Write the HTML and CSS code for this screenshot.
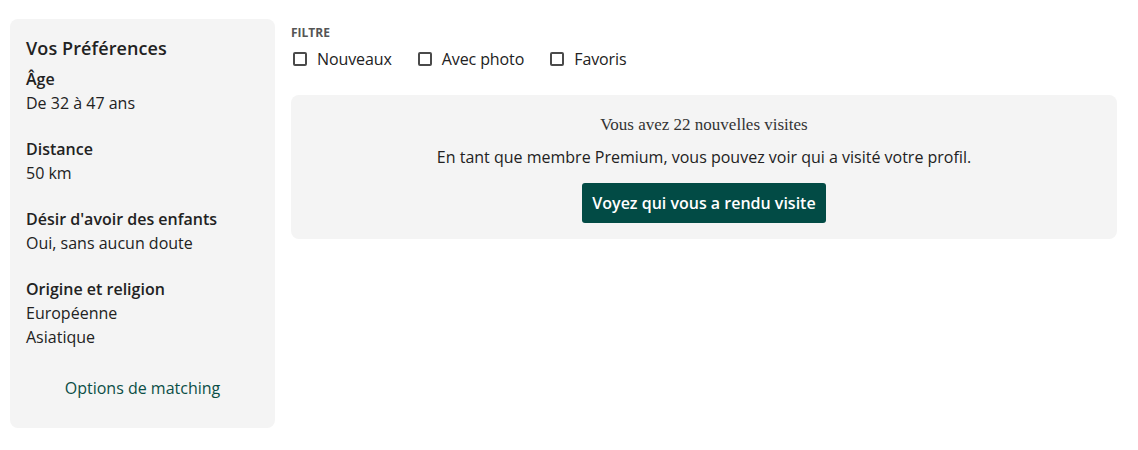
FILE: index.html
```html
<!DOCTYPE html>
<html lang="fr">
<head>
    <meta charset="UTF-8">
    <meta name="viewport" content="width=device-width, initial-scale=1.0">
    <title>Visites</title>
    <link rel="stylesheet" href="styles.css">
</head>
<body>
    <div class="page">
        <aside class="prefs">
            <h2 class="prefs-title">Vos Préférences</h2>
            <div class="pref">
                <div class="pref-label">Âge</div>
                <div>De 32 à 47 ans</div>
            </div>
            <div class="pref">
                <div class="pref-label">Distance</div>
                <div>50 km</div>
            </div>
            <div class="pref">
                <div class="pref-label">Désir d'avoir des enfants</div>
                <div>Oui, sans aucun doute</div>
            </div>
            <div class="pref">
                <div class="pref-label">Origine et religion</div>
                <div>Européenne</div>
                <div>Asiatique</div>
            </div>
            <a class="prefs-link" href="#">Options de matching</a>
        </aside>

        <main class="content">
            <div class="filter-title">FILTRE</div>
            <div class="filters">
                <label class="filter"><span class="box"></span>Nouveaux</label>
                <label class="filter"><span class="box"></span>Avec photo</label>
                <label class="filter"><span class="box"></span>Favoris</label>
            </div>

            <div class="promo">
                <h3 class="promo-title">Vous avez 22 nouvelles visites</h3>
                <p class="promo-text">En tant que membre Premium, vous pouvez voir qui a visité votre profil.</p>
                <button class="promo-btn">Voyez qui vous a rendu visite</button>
            </div>
        </main>
    </div>
</body>
</html>
```

FILE: styles.css
```css
body {
    margin: 0;
    font-family: "Open Sans", "Noto Sans", sans-serif;
    font-size: 16px;
    color: #222;
    background-color: #fff;
}

.page {
    display: flex;
    align-items: flex-start;
    gap: 16px;
    padding: 19px 21px 0 10px;
}

.prefs {
    width: 265px;
    flex-shrink: 0;
    box-sizing: border-box;
    padding: 16px 16px 28px 16px;
    background-color: #f4f4f4;
    border-radius: 8px;
    line-height: 24px;
}

.prefs-title {
    margin: 0 0 6px 0;
    font-size: 18px;
    font-weight: 600;
    line-height: 26px;
    letter-spacing: 0.1px;
}

.pref {
    margin-bottom: 22px;
}

.pref-label {
    font-weight: 600;
}

.prefs-link {
    display: block;
    text-align: center;
    margin-top: 27px;
    color: #0b4e46;
    text-decoration: none;
}

.content {
    flex: 1;
}

.filter-title {
    font-size: 12px;
    font-weight: 700;
    color: #555;
    line-height: 14px;
    margin-top: 7px;
}

.filters {
    display: flex;
    gap: 24px;
    margin-top: 7px;
    line-height: 24px;
}

.filter {
    display: flex;
    align-items: center;
    gap: 10px;
    cursor: pointer;
    letter-spacing: -0.1px;
}

.box {
    width: 10px;
    height: 10px;
    border: 2px solid #4a4a4a;
    border-radius: 2px;
    margin-left: 2px;
}

.promo {
    margin-top: 24px;
    padding: 18px 16px 16px 16px;
    background-color: #f4f4f4;
    border-radius: 8px;
    text-align: center;
}

.promo-title {
    margin: 0;
    font-family: "Liberation Serif", "DejaVu Serif", serif;
    font-size: 17px;
    font-weight: 400;
    line-height: 24px;
    color: #333;
}

.promo-text {
    margin: 8px 0 14px 0;
    line-height: 24px;
}

.promo-btn {
    display: block;
    margin: 0 auto;
    padding: 0 10px;
    height: 40px;
    border: none;
    border-radius: 3px;
    background-color: #024b45;
    color: #fff;
    font-family: "Open Sans", "Noto Sans", sans-serif;
    font-size: 16px;
    font-weight: 600;
    cursor: pointer;
}
```
